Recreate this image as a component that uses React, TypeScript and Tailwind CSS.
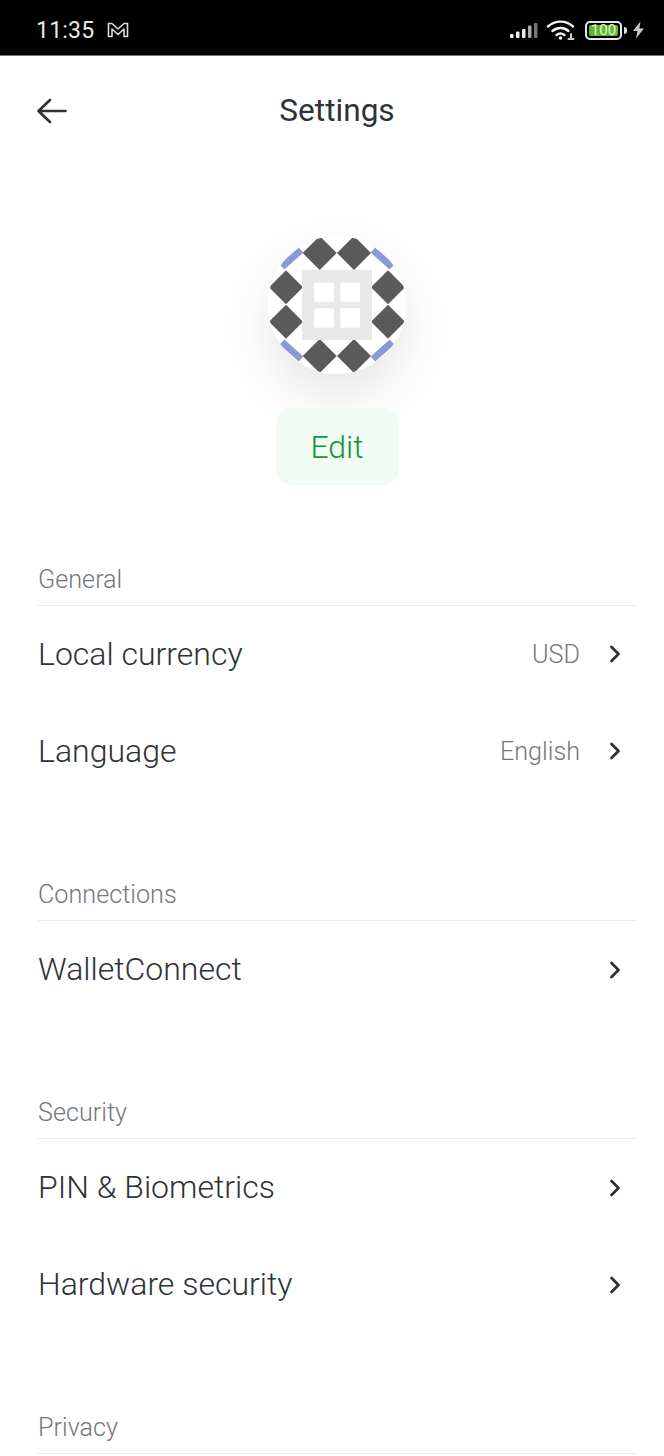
import { ChevronRight } from "lucide-react";

const DIAMONDS = [
  [52.7, 18],
  [87, 18],
  [19, 52.3],
  [19, 86.7],
  [121, 52.3],
  [121, 86.7],
  [52.7, 121],
  [87, 121],
];

const DASHES = [
  [15, 32, 34, 15],
  [106, 15, 125, 32],
  [15, 107, 34, 124],
  [106, 124, 125, 107],
];

function StatusBar() {
  return (
    <div className="h-[56px] bg-black flex items-center justify-between pt-[5px] pl-[36px] pr-[19px] border-b border-[#777]">
      <div className="flex items-center gap-[13px]">
        <span className="text-[23px] leading-none tracking-[0.2px] text-[#e8e8e8] font-['Roboto',sans-serif]">11:35</span>
        <svg width="22" height="16" viewBox="0 0 22 16" fill="none" stroke="#ddd" strokeWidth="1.6" strokeLinejoin="round">
          <path d="M1.500 1.500h3.500L11 7 17 1.500h3.500v13h-3.500V7L11 12.500 5 7v7.500H1.500z" />
        </svg>
      </div>
      <div className="flex items-center">
        <svg width="28" height="18" viewBox="0 0 28 18" fill="#eee">
          <rect x="0" y="13" width="3.500" height="4" rx="1" />
          <rect x="6" y="10.500" width="3.500" height="6.500" rx="1" />
          <rect x="12" y="8" width="3.500" height="9" rx="1" />
          <rect x="18" y="4.500" width="3.500" height="12.500" fill="#aaa" rx="1" />
          <rect x="24" y="2" width="3.500" height="15" fill="#777" rx="1" />
        </svg>
        <svg className="ml-[8px]" width="30" height="22" viewBox="0 0 30 22" fill="none" stroke="#f2f2f2" strokeWidth="2.400" strokeLinecap="round">
          <path d="M2 7.500C9 1 20 1 27 7.500" />
          <path d="M6.500 12c4.500-4 11.500-4 16 0" />
          <path d="M10.500 16c2.500-2 5.500-2 8 0" />
          <circle cx="14.500" cy="19" r="1.800" fill="#f2f2f2" stroke="none" />
          <path d="M25 15v4M22.500 20h5" stroke="#ccc" strokeWidth="2" />
        </svg>
        <div className="ml-[9px] w-[37px] h-[19px] rounded-[5px] border-2 border-[#e8e8e8] p-[2px] flex">
          <div className="flex-1 rounded-[2px] bg-[#5cb82c] flex items-center justify-center text-[15px] leading-none text-[#e6f5da] font-['Roboto',sans-serif]">100</div>
        </div>
        <div className="ml-[2px] w-[3px] h-[7px] rounded-r-sm bg-[#ddd]" />
        <svg className="ml-[5px]" width="13" height="18" viewBox="0 0 12 18" fill="#ccc">
          <path d="M8 0.500 0.500 10h4.500L3.500 17.500 11.500 7.500H6.800z" />
        </svg>
      </div>
    </div>
  );
}

function Avatar() {
  return (
    <div className="w-[138px] h-[138px] rounded-full bg-white shadow-[0_22px_50px_rgba(0,0,0,0.1)]">
      <svg className="-ml-px -mt-px" width="140" height="140" viewBox="0 0 140 140">
        <defs>
          <clipPath id="avatar-clip">
            <circle cx="70" cy="70" r="69" />
          </clipPath>
        </defs>
        <g clipPath="url(#avatar-clip)">
          {DASHES.map(([x1, y1, x2, y2], i) => (
            <line key={i} x1={x1} y1={y1} x2={x2} y2={y2} stroke="#8a9ad6" strokeWidth="7" />
          ))}
          {DIAMONDS.map(([cx, cy], i) => (
            <path key={i} d={`M${cx} ${cy - 17}L${cx + 17} ${cy}L${cx} ${cy + 17}L${cx - 17} ${cy}Z`} fill="#5a5a5a" />
          ))}
          <rect x="35" y="35" width="70" height="70" fill="#e8e8e8" />
          <rect x="47.300" y="47.700" width="19.700" height="19" fill="#fff" />
          <rect x="73.300" y="47.700" width="19.700" height="19" fill="#fff" />
          <rect x="47.300" y="73.300" width="19.700" height="19.400" fill="#fff" />
          <rect x="73.300" y="73.300" width="19.700" height="19.400" fill="#fff" />
        </g>
      </svg>
    </div>
  );
}

function Row({ label, value }: { label: string; value?: string }) {
  return (
    <div className="h-[97px] flex items-center justify-between">
      <span className="mb-[2px] text-[32px] font-light text-[#2e3338]">{label}</span>
      <div className="flex items-center">
        {value && <span className="text-[25.2px] font-light text-[#74777a] mr-[21px]">{value}</span>}
        <ChevronRight className="mr-[7px] text-[#2e3338]" size={28} strokeWidth={2.400} />
      </div>
    </div>
  );
}

function Section({ title, children }: { title: string; children?: React.ReactNode }) {
  return (
    <div>
      <div className="mx-[38px] h-[45px] pb-[6px] flex items-center text-[25.2px] font-light text-[#74777a]">{title}</div>
      <div className="ml-[38px] mr-[28px] border-t border-[#ececec]">{children}</div>
    </div>
  );
}

export default function App() {
  return (
    <div className="w-[664px] h-[1456px] overflow-hidden bg-white font-['Roboto',sans-serif]">
      <StatusBar />
      <div className="relative h-[109px] pl-[10px] flex items-center justify-center">
        <svg className="absolute left-[36px] top-[41px]" width="32" height="28" viewBox="0 0 32 28" fill="none" stroke="#2e3338" strokeWidth="2.700" strokeLinecap="round" strokeLinejoin="round">
          <path d="M2.500 16H29.500M14 5 2.500 16 14 27" transform="translate(0 -2)" />
        </svg>
        <span className="text-[31.6px] text-[#2e3338]">Settings</span>
      </div>
      <div className="mt-[71px] pl-[10px] flex flex-col items-center">
        <Avatar />
        <button className="mt-[34px] w-[123px] h-[77px] rounded-[16px] bg-[#f0fbf3] text-[32px] font-light text-[#14933c]">Edit</button>
      </div>
      <div className="mt-[75px] flex flex-col gap-[75px]">
        <Section title="General">
          <Row label="Local currency" value="USD" />
          <Row label="Language" value="English" />
        </Section>
        <Section title="Connections">
          <Row label="WalletConnect" />
        </Section>
        <Section title="Security">
          <Row label="PIN & Biometrics" />
          <Row label="Hardware security" />
        </Section>
        <Section title="Privacy" />
      </div>
    </div>
  );
}
